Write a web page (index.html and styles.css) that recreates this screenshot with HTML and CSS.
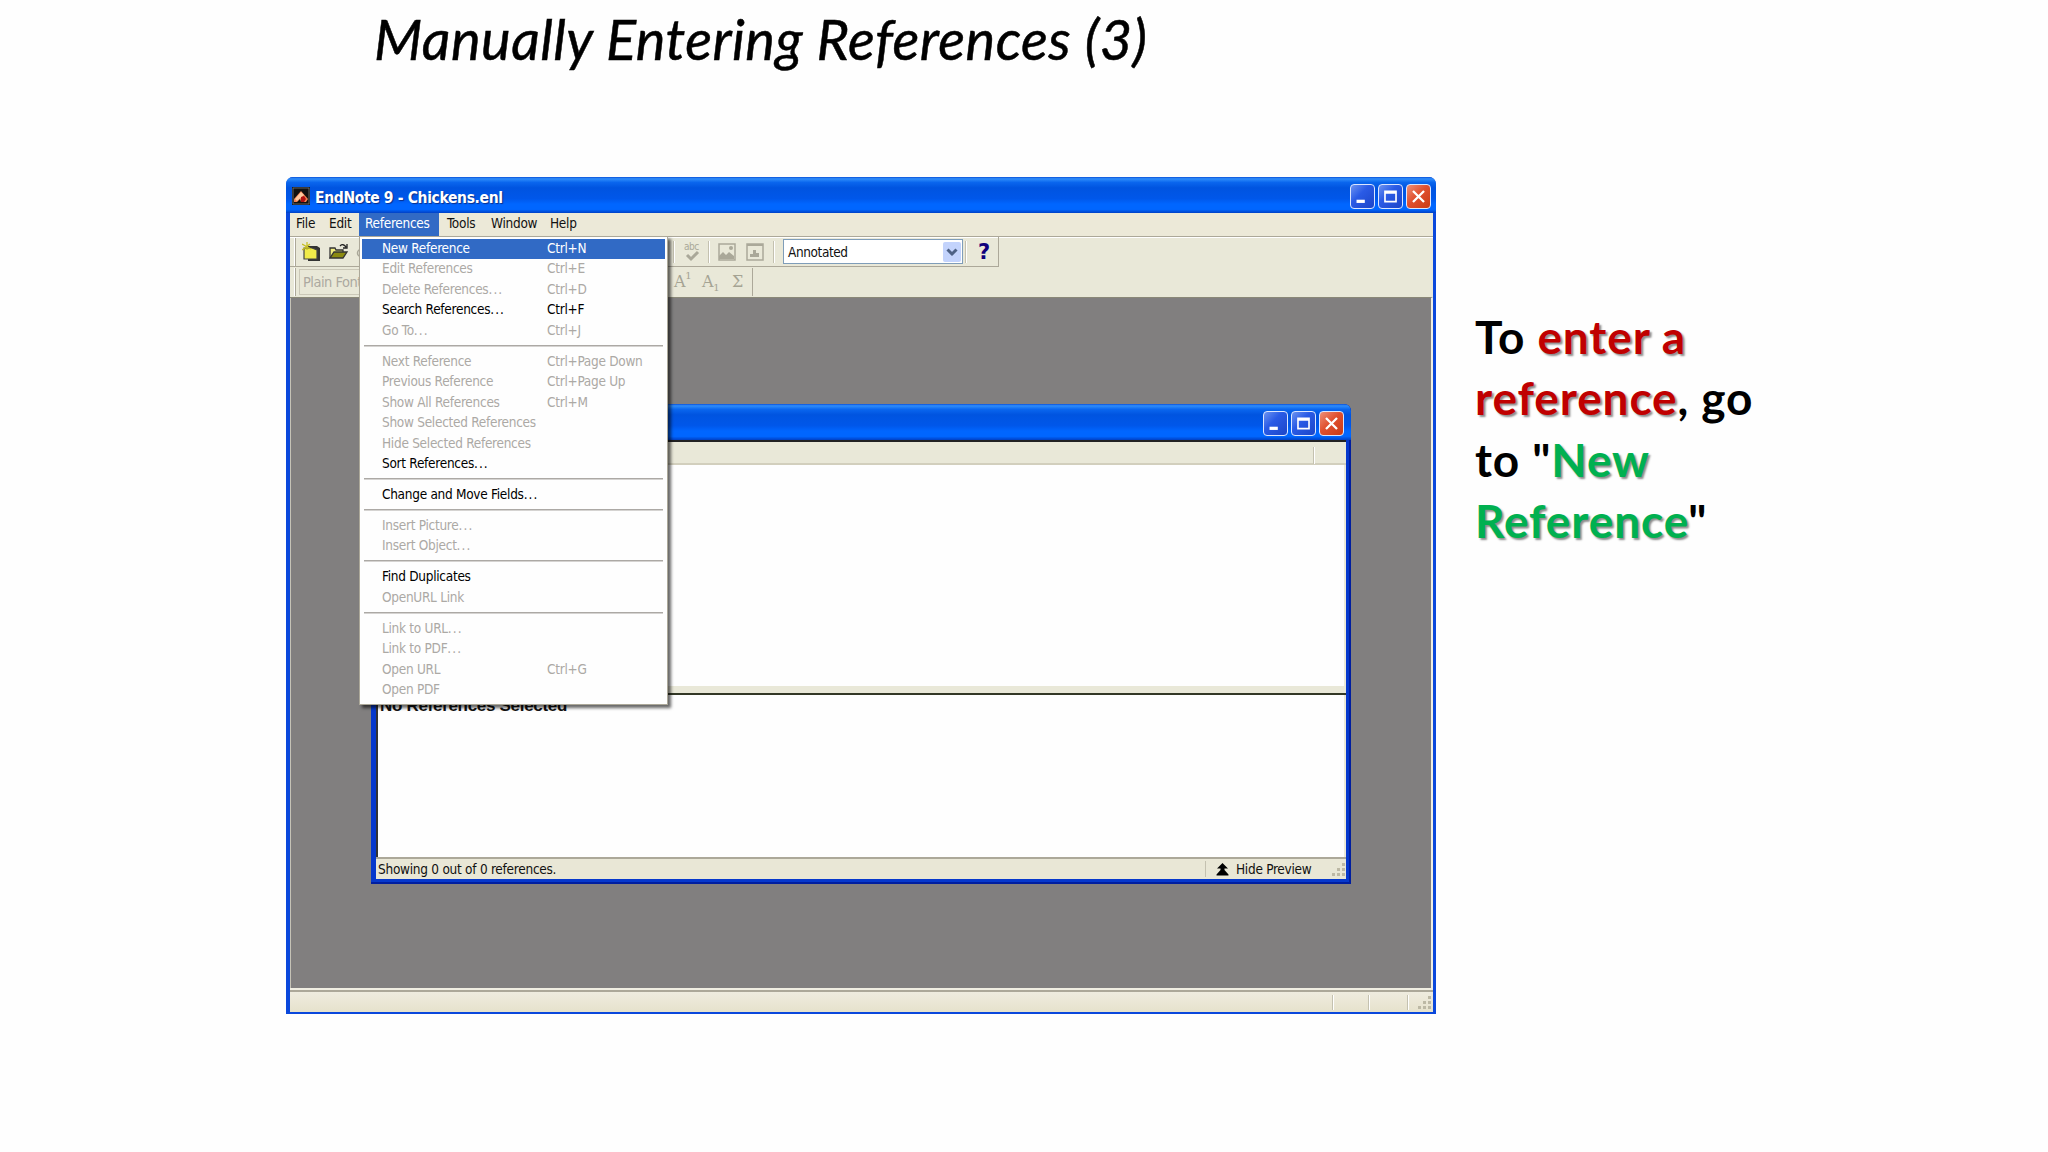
FILE: index.html
```
<!DOCTYPE html>
<html lang="en">
<head>
    <meta charset="UTF-8">
    <title>Manually Entering References (3)</title>
    <link rel="stylesheet" href="styles.css">
</head>
<body>
    <h1><span>Manually Entering References (3)</span></h1>
    <div class="content">
        <div class="window">
            <div class="titlebar">
                <svg class="app-icon" width="18" height="18" viewBox="0 0 18 18">
                    <rect width="18" height="18" fill="#111"/>
                    <rect x="1" y="1" width="16" height="16" fill="none" stroke="#888" stroke-width=".7"/>
                    <path d="M2 12L9 4l7 8-2 3H9l-1-3-3 3H2z" fill="#f08050"/>
                    <path d="M3 12l6-7 3 3-7 6z" fill="#ffc9a0"/>
                    <path d="M9 10l3-1 2 3-2 3H9z" fill="#b01010"/>
                </svg>
                <span class="title">EndNote 9 - Chickens.enl</span>
                <div class="controls">
                    <svg viewBox="0 0 25 25"><rect x="6" y="16" width="9" height="3.500" fill="#fff"/></svg>
                    <svg viewBox="0 0 25 25"><path d="M6.500 7h12v11h-12zM6.500 8.500h12" fill="none" stroke="#fff" stroke-width="1.800"/></svg>
                    <svg class="close" viewBox="0 0 25 25"><path d="M6.500 6.500l12 12M18.500 6.500l-12 12" stroke="#fff" stroke-width="2.500"/></svg>
                </div>
            </div>
            <div class="menubar">
                <span class="file">File</span>
                <span class="edit">Edit</span>
                <div class="open"><span>References</span>
                    <ul class="menu">
                        <li class="on selected"><span>New Reference</span><kbd>Ctrl+N</kbd></li>
                        <li><span>Edit References</span><kbd>Ctrl+E</kbd></li>
                        <li><span>Delete References<i>...</i></span><kbd>Ctrl+D</kbd></li>
                        <li class="on"><span>Search References<i>...</i></span><kbd>Ctrl+F</kbd></li>
                        <li><span>Go To<i>...</i></span><kbd>Ctrl+J</kbd></li>
                        <li class="line"></li>
                        <li><span>Next Reference</span><kbd>Ctrl+Page Down</kbd></li>
                        <li><span>Previous Reference</span><kbd>Ctrl+Page Up</kbd></li>
                        <li><span>Show All References</span><kbd>Ctrl+M</kbd></li>
                        <li><span>Show Selected References</span></li>
                        <li><span>Hide Selected References</span></li>
                        <li class="on"><span>Sort References<i>...</i></span></li>
                        <li class="line"></li>
                        <li class="on"><span>Change and Move Fields<i>...</i></span></li>
                        <li class="line"></li>
                        <li><span>Insert Picture<i>...</i></span></li>
                        <li><span>Insert Object<i>...</i></span></li>
                        <li class="line"></li>
                        <li class="on"><span>Find Duplicates</span></li>
                        <li><span>OpenURL Link</span></li>
                        <li class="line"></li>
                        <li><span>Link to URL<i>...</i></span></li>
                        <li><span>Link to PDF<i>...</i></span></li>
                        <li><span>Open URL</span><kbd>Ctrl+G</kbd></li>
                        <li><span>Open PDF</span></li>
                    </ul>
                </div>
                <span class="tools">Tools</span>
                <span class="win">Window</span>
                <span>Help</span>
            </div>
            <div class="toolbar main">
                <i class="grip"></i>
                <svg class="new" width="19" height="20" viewBox="0 0 19 20">
                    <path d="M6 4h9l3 2v13H6z" fill="#333"/>
                    <path d="M2 6h8l5 2v9H2z" fill="#f0ea4a" stroke="#444" stroke-width="1.200"/>
                    <path d="M5 0v8M0 2l9 5M0 8l8-6" stroke="#c5bd20" stroke-width="1.200"/>
                </svg>
                <svg class="folder" width="20" height="18" viewBox="0 0 20 18">
                    <path d="M1 15V5h5l1 2h7v3" fill="#f2ee80" stroke="#333" stroke-width="1.300"/>
                    <path d="M1 15l4-6h13l-4 6z" fill="#8b8a10" stroke="#333" stroke-width="1.300"/>
                    <path d="M11 3q3-3 6 1M18 1v4h-4" fill="none" stroke="#222" stroke-width="1.300"/>
                </svg>
                <svg class="link" width="14" height="14" viewBox="0 0 14 14"><circle cx="5" cy="8" r="3.500" fill="none" stroke="#aaa899" stroke-width="1.500"/></svg>
                <i class="sep first"></i>
                <svg class="spell" width="18" height="20" viewBox="0 0 18 20">
                    <text x="0" y="8" textLength="15">abc</text>
                    <path d="M3 13l4 4 7-7" fill="none" stroke="#aaa899" stroke-width="3"/>
                </svg>
                <i class="sep"></i>
                <svg class="pic" width="18" height="18" viewBox="0 0 18 18">
                    <path d="M1 1h16v16H1z" fill="none" stroke="#aaa899" stroke-width="1.500"/>
                    <path d="M1 16v-3l4-4 3 3 3-3 5 4v3z" fill="#aaa899"/><circle cx="13" cy="5" r="2" fill="#aaa899"/>
                </svg>
                <svg class="pic two" width="18" height="18" viewBox="0 0 18 18">
                    <path d="M1 1h16v16H1z" fill="none" stroke="#aaa899" stroke-width="1.500"/>
                    <path d="M1 1h16v2H1zM4 14v-3h3V7h3v3h3v4z" fill="#aaa899"/>
                </svg>
                <i class="sep"></i>
                <div class="combo"><span>Annotated</span>
                    <svg viewBox="0 0 18 20"><path d="M4.500 7.500l4.500 4.500 4.500-4.500" fill="none" stroke="#4d6185" stroke-width="3"/></svg>
                </div>
                <i class="sep"></i>
                <b class="help">?</b>
            </div>
            <div class="toolbar format">
                <i class="grip"></i>
                <div class="font-box">Plain Font</div>
                <span class="glyph">A<sup>1</sup></span>
                <span class="glyph sub">A<sub>1</sub></span>
                <span class="glyph sigma">Σ</span>
                <i class="end"></i>
            </div>
            <div class="workspace">
                <div class="child">
                    <div class="titlebar">
                        <div class="controls">
                            <svg viewBox="0 0 25 25"><rect x="6" y="16" width="9" height="3.500" fill="#fff"/></svg>
                            <svg viewBox="0 0 25 25"><path d="M6.500 7h12v11h-12zM6.500 8.500h12" fill="none" stroke="#fff" stroke-width="1.800"/></svg>
                            <svg class="close" viewBox="0 0 25 25"><path d="M6.500 6.500l12 12M18.500 6.500l-12 12" stroke="#fff" stroke-width="2.500"/></svg>
                        </div>
                    </div>
                    <div class="columns"><i></i></div>
                    <div class="list"></div>
                    <div class="splitter"></div>
                    <div class="preview"><b>No References Selected</b></div>
                    <div class="status">
                        <span class="count">Showing 0 out of 0 references.</span>
                        <div class="hide">
                            <svg width="13" height="13" viewBox="0 0 13 13"><path d="M6.500 0L12 5.500H8.500V7L12.500 11.500v1H.5v-1L4.500 7V5.500H1z"/></svg>
                            <span>Hide Preview</span>
                        </div>
                        <svg class="resize" width="14" height="14" viewBox="0 0 14 14"><path d="M10 1h3v3h-3zM10 6h3v3h-3zM5 6h3v3H5zM10 11h3v3h-3zM5 11h3v3H5zM0 11h3v3H0z"/></svg>
                    </div>
                </div>
            </div>
            <div class="statusbar">
                <i></i><i></i><i></i>
                <svg class="resize" width="14" height="14" viewBox="0 0 14 14"><path d="M10 1h3v3h-3zM10 6h3v3h-3zM5 6h3v3H5zM10 11h3v3h-3zM5 11h3v3H5zM0 11h3v3H0z"/></svg>
            </div>
        </div>
        <p class="note">To <em class="red">enter a</em><br><em class="red">reference</em>, go<br>to "<em class="green">New</em><br><em class="green">Reference</em>"</p>
    </div>
</body>
</html>
```
FILE: styles.css
```
* {
    box-sizing: border-box;
}
body {
    margin: 0;
    height: 1152px;
    background: #fefefe;
    overflow: hidden;
    font-family: "DejaVu Sans Condensed", "DejaVu Sans", sans-serif;
    font-stretch: condensed;
    font-size: 13.5px;
    letter-spacing: -0.28px;
    color: #111;
}
h1 {
    margin: 0;
    height: 177px;
    padding: 5px 0 0 374px;
    font: italic 400 56px/68px Lato, sans-serif;
    letter-spacing: 0.45px;
    -webkit-text-stroke: 0.5px #000;
    color: #000;
    white-space: nowrap;
}
.content {
    display: flex;
    padding-left: 286px;
}
.window {
    display: flex;
    flex: none;
    flex-direction: column;
    width: 1150px;
    height: 837px;
    padding: 0 3px 2px 4px;
    background: #0a48dc;
    border-radius: 7px 7px 0 0;
}
.titlebar {
    display: flex;
    flex: none;
    align-items: center;
    height: 36px;
    margin: 0 -3px 0 -4px;
    padding: 2px 5px 0 6px;
    border-radius: 7px 7px 0 0;
    background: linear-gradient(#0a51d8 0, #2f8dfa 5%, #0a66ee 15%, #0054e0 30%, #0057ea 60%, #0066ff 75%, #0066ff 90%, #0040c5 100%);
}
.title {
    margin: 3px 0 0 5px;
    font-size: 15.5px;
    font-weight: bold;
    letter-spacing: -0.35px;
    color: #fff;
    text-shadow: 1px 1px 1px #0a2f8a;
}
.controls {
    display: flex;
    gap: 3px;
    margin-left: auto;
}
.controls svg {
    width: 25px;
    height: 25px;
    border: 1px solid #dbe6ff;
    border-radius: 4px;
    background: linear-gradient(135deg, #6c93f0, #2a5be6 40%, #1c45c8);
}
.controls .close {
    background: linear-gradient(135deg, #ee9078, #e0502f 45%, #c93a15);
}
.menubar {
    display: flex;
    flex: none;
    height: 23px;
    padding-left: 6px;
    background: #ece9d8;
    line-height: 21px;
}
.menubar .file {
    width: 33px;
}
.menubar .edit {
    width: 30px;
}
.open {
    position: relative;
    width: 80px;
    padding-left: 6px;
    background: #316ac5;
    color: #fff;
}
.tools {
    width: 44px;
    padding-left: 8px;
}
.win {
    width: 59px;
    padding-left: 8px;
}
.win + span {
    padding-left: 8px;
}
.menu {
    position: absolute;
    z-index: 2;
    left: 0;
    top: 23px;
    width: 309px;
    height: 469px;
    margin: 0;
    padding: 2px;
    list-style: none;
    background: #fefefe;
    border: 1px solid #aca899;
    box-shadow: 3px 3px 3px rgba(0, 0, 0, .6);
    color: #aca9a5;
}
.menu li {
    display: flex;
    height: 20.46px;
    padding-left: 20px;
    line-height: 19.5px;
}
.menu li span {
    width: 165px;
}
.menu li i {
    font-style: normal;
    letter-spacing: 1.1px;
}
.menu kbd {
    font: inherit;
}
.menu .on {
    color: #000;
}
.menu .selected {
    background: #316ac5;
    color: #fff;
}
.menu .line {
    height: 10.5px;
    padding: 0;
    margin: 0 2px;
    background: linear-gradient(#aca9a5, #aca9a5) 0 3.5px / 100% 1.5px no-repeat;
}
.toolbar {
    display: flex;
    flex: none;
    align-items: center;
    border-top: 1px solid #aca899;
    background: #e9e8d8;
}
.toolbar.main {
    height: 30px;
    box-shadow: inset 0 1px #fff;
}
.grip {
    width: 2px;
    height: 28px;
    margin: 0 0 0 4px;
    background: #fff;
    border-right: 1px solid #aca899;
}
.new {
    margin-left: 6px;
}
.folder {
    margin-left: 8px;
}
.link {
    margin-left: 7px;
}
.sep {
    width: 2px;
    height: 22px;
    background: #c4c1b0;
    border-right: 1px solid #fff;
}
.first {
    margin-left: 303px;
}
.spell {
    margin: 0 6px 0 9px;
}
.spell text {
    font-size: 10px;
    fill: #aaa899;
}
.pic {
    margin-left: 8px;
}
.pic.two {
    margin: 0 9px 0 10px;
}
.combo {
    display: flex;
    align-items: center;
    justify-content: space-between;
    width: 180px;
    height: 25px;
    margin: 0 2px 0 8px;
    padding: 1px 1px 1px 4px;
    border: 1px solid #7f9db9;
    background: #fff;
    letter-spacing: -0.4px;
}
.combo svg {
    width: 18px;
    height: 20px;
    border-radius: 2px;
    background: #c3d3fc;
}
.help {
    width: 32px;
    height: 29px;
    padding-left: 11px;
    border-right: 1px solid #aca899;
    font: bold 21px/31px "DejaVu Sans", sans-serif;
    color: #10007c;
}
.toolbar.format {
    height: 31px;
    /* the line stops where the main toolbar ends */
    border-top: 0;
    background: linear-gradient(#aca899, #aca899) 0 0 / 709px 1px no-repeat, #e9e8d8;
}
.end {
    width: 1px;
    height: 28px;
    background: #aca899;
}
.font-box {
    width: 130px;
    height: 26px;
    margin: 0 245px 0 3px;
    padding-left: 3px;
    border: 1px solid #cbc8b8;
    font-size: 14.5px;
    letter-spacing: -0.5px;
    line-height: 24px;
    color: #aca9a0;
}
.glyph {
    width: 28px;
    font: 16px/28px "DejaVu Serif", serif;
    color: #a5a393;
    white-space: nowrap;
}
.glyph.sub {
    width: 30px;
}
.glyph.sigma {
    width: 20px;
}
.glyph sup, .glyph sub {
    font-size: 10px;
    line-height: 0;
}
.glyph sup {
    vertical-align: 8px;
}
.workspace {
    position: relative;
    flex: 1;
    border: solid #f0eee2;
    border-width: 0 2px 2px 0;
    border-top: 1px solid #8a8878;
    box-shadow: inset 1px 0 #c5c2b5;
    background: #817f7f;
}
.child {
    position: absolute;
    display: flex;
    flex-direction: column;
    left: 81px;
    top: 106px;
    width: 980px;
    height: 480px;
    padding: 0 5px 5px 5px;
    border-radius: 7px 7px 0 0;
    background: #0638cc;
    box-shadow: inset -2px -2px #001ea0;
}
.child .titlebar {
    height: 36px;
    margin: 0 -5px;
    padding: 3px 7px 0;
}
.columns {
    flex: none;
    height: 25px;
    padding: 5px 31px 0 0;
    border-top: 2px solid #222;
    border-bottom: 2px solid #d2cfbd;
    background: #e9e8d8;
}
.columns i {
    display: block;
    width: 2px;
    height: 17px;
    margin-left: auto;
    background: #c4c1b0;
    border-right: 1px solid #fff;
}
.list {
    flex: none;
    height: 221px;
    background: #fefefe;
    border-right: 2px solid #ece9d8;
}
.splitter {
    flex: none;
    height: 9px;
    background: #e9e8d8;
    border-bottom: 2px solid #333826;
}
.preview {
    flex: 1;
    background: #fefefe;
    padding: 1px 0 0 2px;
    border-left: 2px solid #333;
    border-right: 2px solid #ece9d8;
    font: 17px/20px "Liberation Sans", sans-serif;
    letter-spacing: -0.3px;
}
.status {
    display: flex;
    flex: none;
    align-items: center;
    height: 22px;
    border-top: 2px solid #aca899;
    background: #e9e7d6;
}
.count {
    padding-left: 2px;
    letter-spacing: -0.26px;
}
.hide {
    display: flex;
    align-items: center;
    gap: 7px;
    width: 127px;
    height: 16px;
    margin-left: auto;
    padding-left: 10px;
    border-left: 1px solid #c4c1b0;
}
.resize {
    fill: #bdb9a5;
}
.statusbar {
    display: flex;
    flex: none;
    align-items: center;
    justify-content: flex-end;
    height: 22px;
    padding-right: 1px;
    border-top: 2px solid #aca899;
    background: linear-gradient(#efecdf, #e6e2cc);
}
.statusbar i {
    width: 2px;
    height: 15px;
    margin-right: 34px;
    background: #c4c1b0;
    border-right: 1px solid #fff;
}
.statusbar i:nth-child(2) {
    margin-right: 37px;
}
.statusbar i:nth-child(3) {
    margin-right: 9px;
}
.note {
    margin: 129px 0 0 39px;
    font: bold 46px/61.3px Lato, sans-serif;
    letter-spacing: 0.9px;
    color: #000;
    white-space: nowrap;
}
.note em {
    font-style: normal;
    text-shadow: 2px 2px 2px rgba(0, 0, 0, .45);
}
.red {
    color: #c00000;
}
.green {
    color: #00b050;
}
```
